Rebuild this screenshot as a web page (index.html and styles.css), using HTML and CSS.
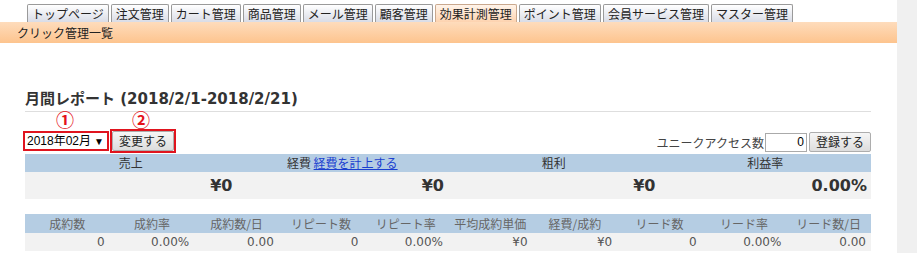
FILE: index.html
```html
<!DOCTYPE html>
<html lang="ja">
<head>
  <meta charset="UTF-8">
  <title>クリック管理一覧</title>
  <link rel="stylesheet" href="styles.css">
</head>
<body>
  <div class="page">
    <ul class="tabs">
      <li>トップページ</li>
      <li>注文管理</li>
      <li>カート管理</li>
      <li>商品管理</li>
      <li>メール管理</li>
      <li>顧客管理</li>
      <li class="active">効果計測管理</li>
      <li>ポイント管理</li>
      <li>会員サービス管理</li>
      <li>マスター管理</li>
    </ul>
    <div class="subbar">クリック管理一覧</div>

    <div class="content">
      <h2 class="report-title">月間レポート (2018/2/1-2018/2/21)</h2>

      <div class="marks">
        <span class="mark mark-select">①</span>
        <span class="mark mark-button">②</span>
      </div>

      <div class="controls">
        <div class="left">
          <span class="red-box">
            <span class="select">2018年02月<span class="arrow">▼</span></span>
          </span>
          <span class="red-box">
            <button class="btn">変更する</button>
          </span>
        </div>
        <div class="right">
          <span class="label">ユニークアクセス数</span>
          <input class="count" type="text" value="0">
          <button class="btn">登録する</button>
        </div>
      </div>

      <table class="summary">
        <tr>
          <th>売上</th>
          <th>経費 <a href="#">経費を計上する</a></th>
          <th>粗利</th>
          <th>利益率</th>
        </tr>
        <tr>
          <td>¥0</td>
          <td>¥0</td>
          <td>¥0</td>
          <td>0.00%</td>
        </tr>
      </table>

      <table class="detail">
        <tr>
          <th>成約数</th>
          <th>成約率</th>
          <th>成約数/日</th>
          <th>リピート数</th>
          <th>リピート率</th>
          <th>平均成約単価</th>
          <th>経費/成約</th>
          <th>リード数</th>
          <th>リード率</th>
          <th>リード数/日</th>
        </tr>
        <tr>
          <td>0</td>
          <td>0.00%</td>
          <td>0.00</td>
          <td>0</td>
          <td>0.00%</td>
          <td>¥0</td>
          <td>¥0</td>
          <td>0</td>
          <td>0.00%</td>
          <td>0.00</td>
        </tr>
      </table>
    </div>
  </div>
</body>
</html>
```

FILE: styles.css
```css
body {
  margin: 0;
  background-color: #f0f0f0;
  font-family: 'Noto Sans CJK JP', sans-serif;
  font-size: 12px;
  color: #333;
}
.page {
  width: 897px;
  height: 253px;
  background-color: #fff;
  overflow: hidden;
}
.tabs {
  list-style: none;
  margin: 0;
  padding: 4px 0 0 27px;
  display: flex;
  gap: 2px;
}
.tabs li {
  height: 17px;
  line-height: 17px;
  padding: 0 4px;
  border: 1px solid #9a9a9a;
  border-bottom: none;
  border-radius: 2px 2px 0 0;
  background: linear-gradient(#ffffff, #d9dce6);
  color: #222;
  font-size: 12px;
}
.tabs li.active {
  background: linear-gradient(#fff4ea, #fdd3b0);
  border-color: #c9a88e;
}
.subbar {
  height: 21px;
  line-height: 21px;
  padding-left: 17px;
  background: linear-gradient(#fedcbc, #fdc48e);
  color: #222;
}
.content {
  padding: 0 26px 0 25px;
}
.report-title {
  margin: 46px 0 0;
  padding-bottom: 2px;
  border-bottom: 1px solid #dedede;
  font-family: 'DejaVu Sans', 'Noto Sans CJK JP', sans-serif;
  font-size: 15px;
  line-height: 20px;
  font-weight: bold;
  color: #333;
}
.marks {
  height: 18px;
  position: relative;
}
.mark {
  position: absolute;
  top: -1px;
  color: #e4121b;
  font-size: 18px;
  line-height: 16px;
  font-weight: bold;
}
.mark-select {
  left: 31px;
}
.mark-button {
  left: 107px;
}
.controls {
  display: flex;
  justify-content: space-between;
  align-items: flex-end;
  height: 23px;
}
.left {
  display: flex;
  align-items: center;
  gap: 1px;
  margin-left: -2px;
}
.red-box {
  display: inline-flex;
  border: 2px solid #e0141e;
}
.select {
  display: inline-block;
  width: 80px;
  height: 16px;
  line-height: 16px;
  padding-left: 2px;
  font-family: 'Liberation Sans', 'Noto Sans CJK JP', sans-serif;
  font-size: 12px;
  color: #000;
  background-color: #fff;
}
.arrow {
  font-size: 10px;
  margin-left: 3px;
}
.btn {
  height: 20px;
  padding: 0 6px;
  border: 1px solid #adadad;
  border-radius: 2px;
  background: linear-gradient(#f6f6f6, #dddddd);
  font-family: 'Noto Sans CJK JP', sans-serif;
  font-size: 12px;
  color: #222;
  line-height: 18px;
}
.right {
  display: flex;
  align-items: center;
  gap: 2px;
  padding-bottom: 1px;
}
.right .label {
  color: #444;
  margin-right: -1px;
}
.count {
  width: 36px;
  height: 15px;
  padding: 1px 2px;
  border: 1px solid #aaa;
  text-align: right;
  font-family: 'Liberation Sans', sans-serif;
  font-size: 12px;
}
table {
  width: 100%;
  border-collapse: collapse;
  table-layout: fixed;
}
th {
  background-color: #b5cde3;
  font-weight: normal;
  text-align: center;
  height: 18px;
  line-height: 18px;
  padding: 0;
}
th a {
  color: #1a3fd0;
}
td {
  background-color: #f2f2f2;
  text-align: right;
}
.summary {
  margin-top: 1px;
}
.summary th {
  color: #333;
}
.summary td {
  height: 27px;
  padding: 0 4px 0 0;
  font-family: 'DejaVu Sans', sans-serif;
  font-size: 16px;
  font-weight: bold;
  color: #333;
}
.detail {
  margin-top: 15px;
}
.detail th {
  color: #666;
  height: 19px;
}
.detail td {
  height: 18px;
  padding: 0 5px 0 0;
  font-family: 'DejaVu Sans', sans-serif;
  font-size: 12px;
  color: #555;
}
```
